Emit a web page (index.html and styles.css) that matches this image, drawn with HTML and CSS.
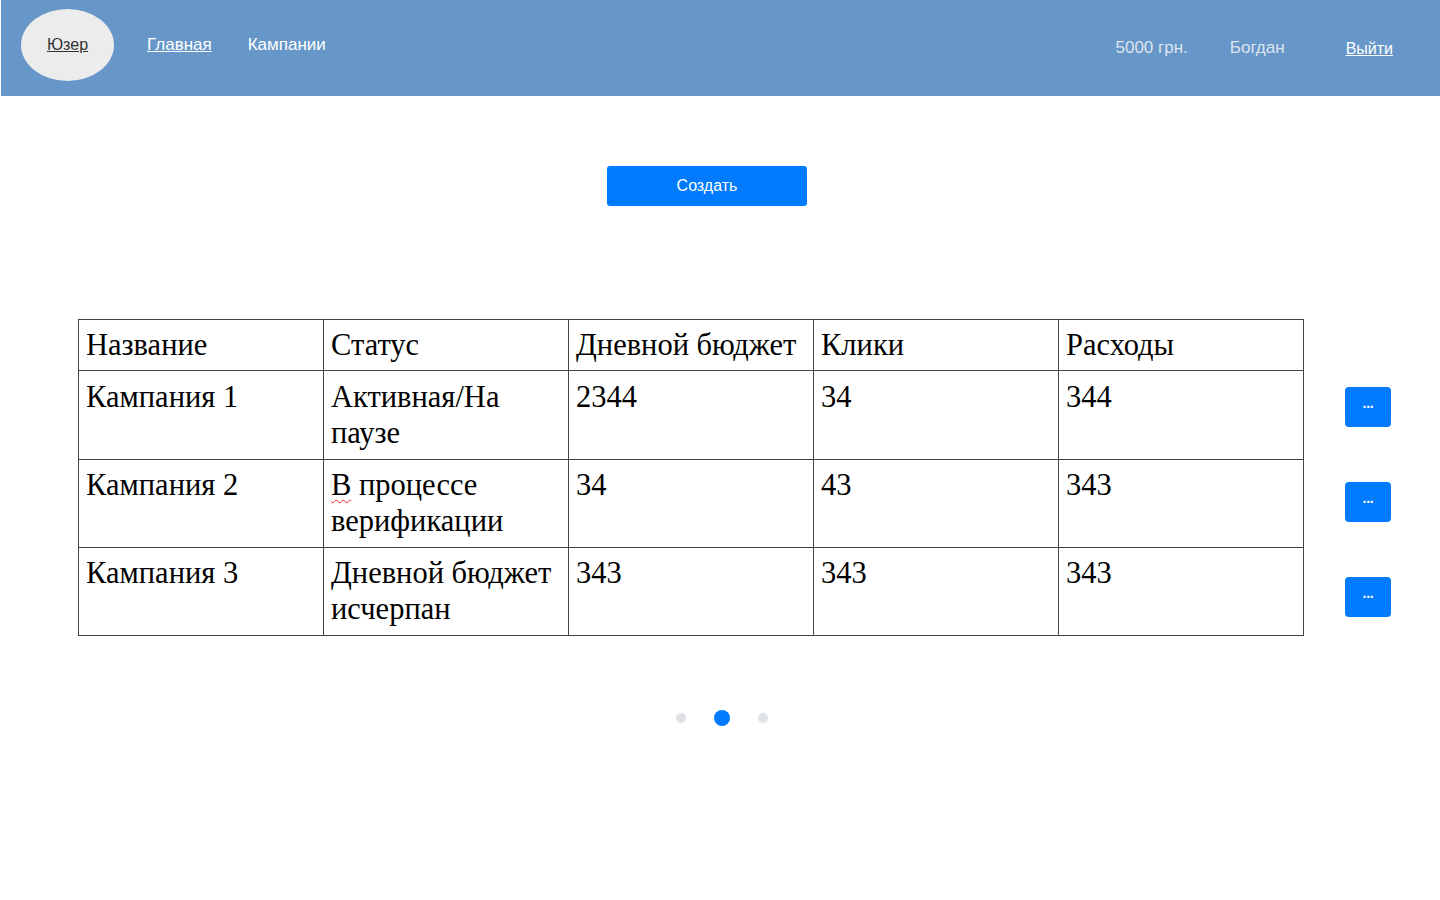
FILE: index.html
```html
<!DOCTYPE html>
<html lang="ru">
<head>
<meta charset="utf-8">
<title>Кампании</title>
<link rel="stylesheet" href="styles.css">
</head>
<body>
<header class="topbar">
  <div class="avatar"><a href="#" class="avatar-link">Юзер</a></div>
  <nav class="nav">
    <a href="#" class="nav-link underlined">Главная</a>
    <span class="nav-link">Кампании</span>
  </nav>
  <div class="account">
    <span class="balance">5000 грн.</span>
    <span class="username">Богдан</span>
    <a href="#" class="logout">Выйти</a>
  </div>
</header>
<main class="content">
  <div class="create-row"><button class="btn-create">Создать</button></div>
  <div class="table-row">
    <table class="campaigns">
      <thead>
        <tr><th>Название</th><th>Статус</th><th>Дневной бюджет</th><th>Клики</th><th>Расходы</th></tr>
      </thead>
      <tbody>
        <tr class="first"><td>Кампания 1</td><td>Активная/На паузе</td><td>2344</td><td>34</td><td>344</td></tr>
        <tr><td>Кампания 2</td><td><span class="misspelled">В</span> процессе верификации</td><td>34</td><td>43</td><td>343</td></tr>
        <tr><td>Кампания 3</td><td>Дневной бюджет исчерпан</td><td>343</td><td>343</td><td>343</td></tr>
      </tbody>
    </table>
    <div class="actions">
      <button class="btn-more">···</button>
      <button class="btn-more">···</button>
      <button class="btn-more">···</button>
    </div>
  </div>
  <div class="pager">
    <span class="dot"></span>
    <span class="dot active"></span>
    <span class="dot"></span>
  </div>
</main>
</body>
</html>
```
FILE: styles.css
```css
html, body {
  margin: 0;
  padding: 0;
  background: #fff;
}
body {
  font-family: "Liberation Sans", Arial, sans-serif;
}
.topbar {
  margin-left: 1px;
  height: 96px;
  background: #6697c8;
  display: flex;
  align-items: center;
  padding-left: 20px;
  padding-right: 47px;
  box-sizing: border-box;
  font-size: 17px;
}
.avatar {
  width: 93px;
  height: 72px;
  border-radius: 50%;
  background: #ececec;
  display: flex;
  align-items: center;
  justify-content: center;
  margin-top: -6px;
}
.avatar-link {
  color: #333;
  font-size: 16px;
  text-decoration: underline;
}
.nav {
  display: flex;
  align-items: center;
  margin-top: -6px;
}
.nav-link {
  color: #fff;
  margin-left: 33px;
  font-size: 17px;
}
.nav-link + .nav-link {
  margin-left: 36px;
}
.underlined {
  text-decoration: underline;
}
.account {
  margin-left: auto;
  display: flex;
  align-items: center;
}
.balance, .username {
  color: #dde4ee;
}
.username {
  margin-left: 42px;
}
.logout {
  color: #fff;
  text-decoration: underline;
  margin-left: 61px;
  margin-top: 2px;
  font-size: 16px;
}
.content {
  padding-top: 70px;
}
.create-row {
  padding-left: 607px;
}
.btn-create {
  width: 200px;
  height: 40px;
  background: #007bff;
  border: none;
  border-radius: 3px;
  color: #fff;
  font-family: "Liberation Sans", Arial, sans-serif;
  font-size: 16px;
  padding: 0;
  display: block;
}
.table-row {
  display: flex;
  align-items: flex-start;
  margin-top: 113px;
  padding-left: 78px;
}
.campaigns {
  width: 1226px;
  table-layout: fixed;
  border-collapse: collapse;
  font-family: "Liberation Serif", "Times New Roman", serif;
  font-size: 30.5px;
  line-height: 36px;
  color: #000;
}
.campaigns th, .campaigns td {
  border: 1px solid #444;
  text-align: left;
  vertical-align: top;
  font-weight: normal;
  padding: 7px 7px 7px;
}
.campaigns td {
  padding: 7px 7px 8px;
}
.campaigns tr.first td {
  padding-top: 8px;
}
.misspelled {
  text-decoration: underline wavy #e22;
  text-decoration-thickness: 1px;
  text-underline-offset: 4px;
  text-decoration-skip-ink: none;
}
.actions {
  display: flex;
  flex-direction: column;
  gap: 55px;
  margin-left: 41px;
  padding-top: 68px;
}
.btn-more {
  width: 46px;
  height: 40px;
  background: #007bff;
  border: none;
  border-radius: 4px;
  color: #fff;
  font-family: "Liberation Sans", Arial, sans-serif;
  font-size: 14px;
  font-weight: bold;
  letter-spacing: -1px;
  padding: 0;
}
.pager {
  display: flex;
  align-items: center;
  justify-content: center;
  gap: 28px;
  margin-top: 74px;
  padding-left: 4px;
}
.dot {
  width: 10px;
  height: 10px;
  border-radius: 50%;
  background: #dee2e6;
}
.dot.active {
  width: 16px;
  height: 16px;
  background: #007bff;
}
```
